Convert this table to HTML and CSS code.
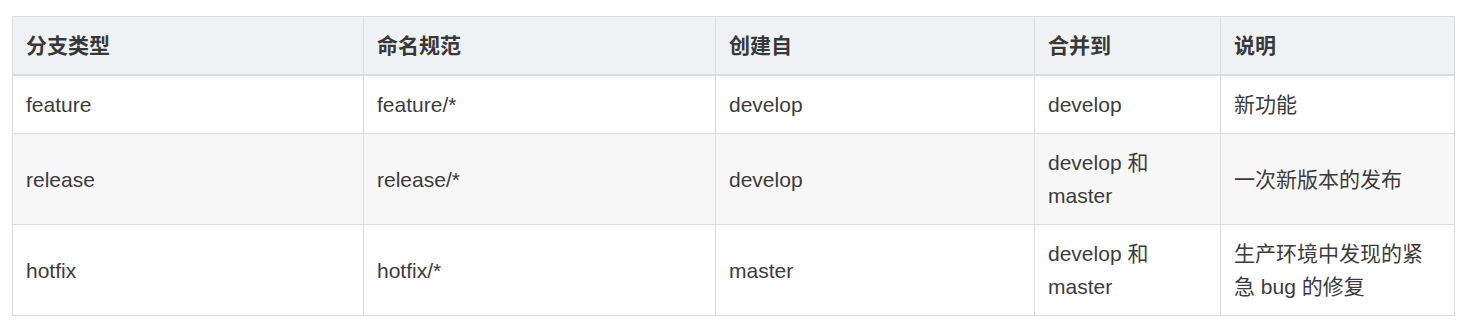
FILE: index.html
```html
<!DOCTYPE html>
<html lang="zh-CN">
<head>
<meta charset="utf-8">
<title>分支类型</title>
<link rel="stylesheet" href="styles.css">
</head>
<body>
<div class="wrap">
<table class="branches">
<colgroup>
<col class="c1"><col class="c2"><col class="c3"><col class="c4"><col class="c5">
</colgroup>
<thead>
<tr><th>分支类型</th><th>命名规范</th><th>创建自</th><th>合并到</th><th>说明</th></tr>
</thead>
<tbody>
<tr><td>feature</td><td>feature/*</td><td>develop</td><td>develop</td><td>新功能</td></tr>
<tr><td>release</td><td>release/*</td><td>develop</td><td>develop 和 master</td><td>一次新版本的发布</td></tr>
<tr><td>hotfix</td><td>hotfix/*</td><td>master</td><td>develop 和 master</td><td>生产环境中发现的紧急 bug 的修复</td></tr>
</tbody>
</table>
</div>
</body>
</html>
```
FILE: styles.css
```css
html, body {
  margin: 0;
  padding: 0;
  background: #ffffff;
}
.wrap {
  padding: 16px 0 0 12px;
}
.branches {
  border-collapse: collapse;
  table-layout: fixed;
  width: 1442px;
  font-family: "Liberation Sans", Arial, "Noto Sans CJK SC", sans-serif;
  font-size: 21px;
  line-height: 33px;
  color: #3c3c3c;
}
.c1 { width: 351px; }
.c2 { width: 352px; }
.c3 { width: 319px; }
.c4 { width: 186px; }
.c5 { width: 234px; }
.branches th,
.branches td {
  border: 1px solid #dcdcdc;
  padding: 12px 13px;
  text-align: left;
  vertical-align: middle;
}
.branches th {
  background: #eff2f5;
  font-weight: bold;
  color: #383838;
  border-bottom: 2px solid #dcdcdc;
}
.branches tbody tr:nth-child(even) td {
  background: #f7f7f7;
}
```
